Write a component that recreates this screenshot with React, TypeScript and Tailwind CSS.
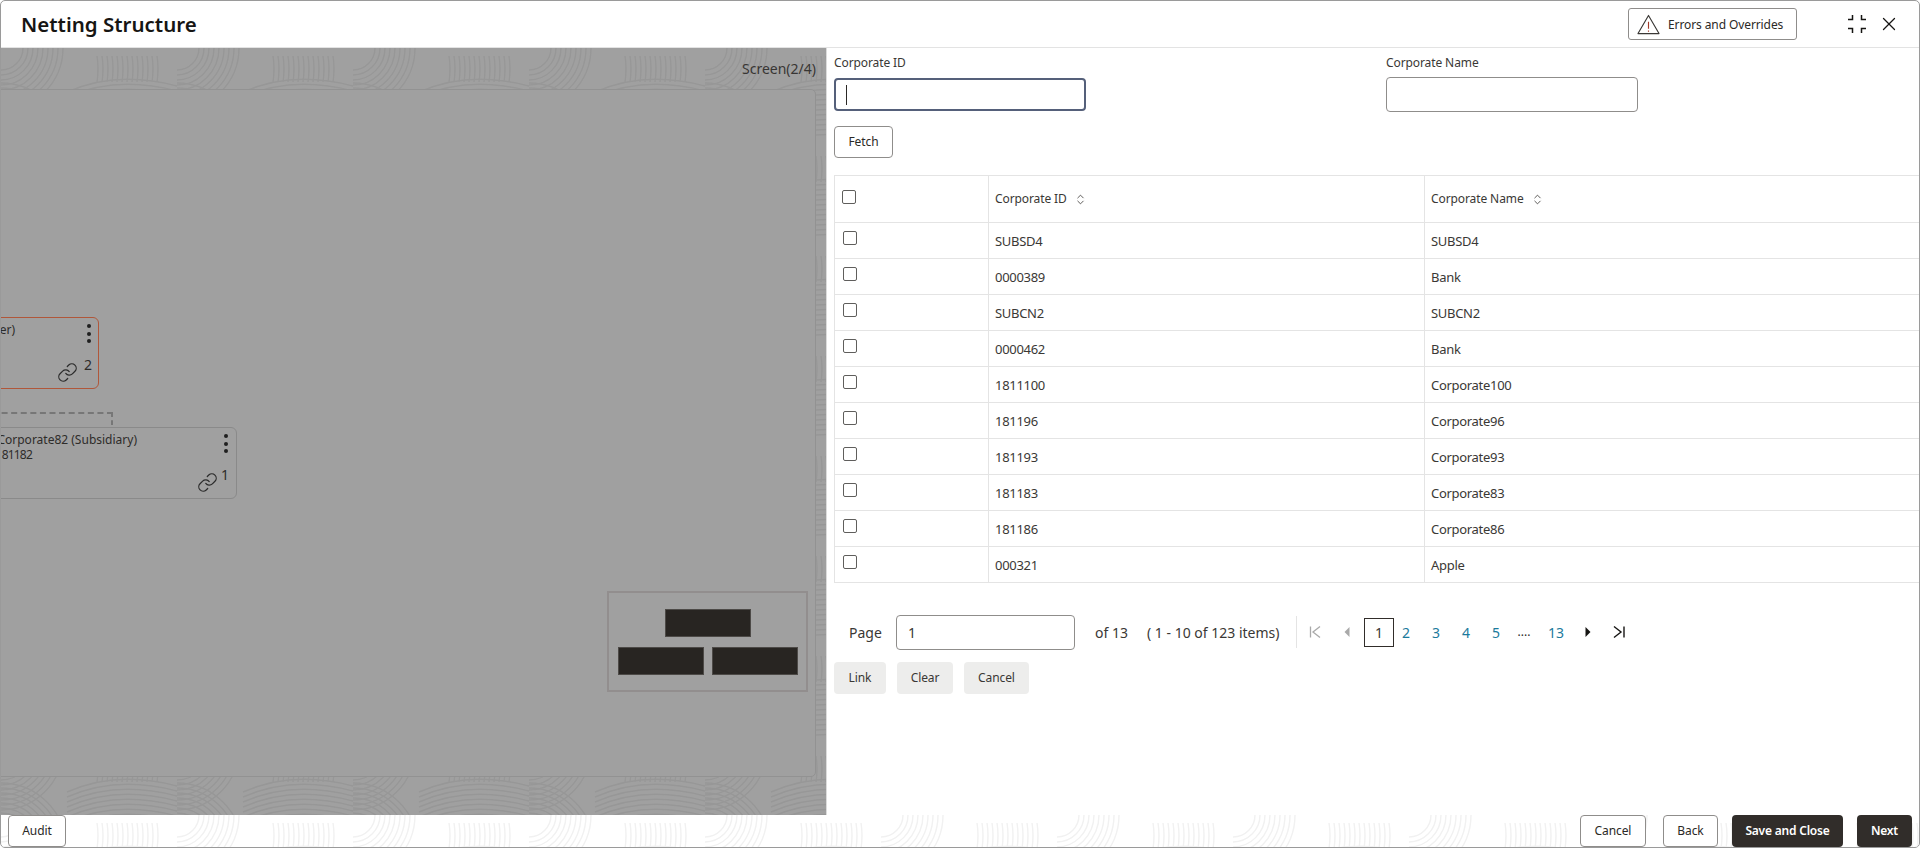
import React from "react";
import { X, ChevronsUpDown, Link as ChainIcon } from "lucide-react";

const rows = [
  ["SUBSD4", "SUBSD4"],
  ["0000389", "Bank"],
  ["SUBCN2", "SUBCN2"],
  ["0000462", "Bank"],
  ["1811100", "Corporate100"],
  ["181196", "Corporate96"],
  ["181193", "Corporate93"],
  ["181183", "Corporate83"],
  ["181186", "Corporate86"],
  ["000321", "Apple"],
];

function Pattern({ id, stroke }: { id: string; stroke: string }) {
  const arcs = (key: string, cx: number, cy: number, from: number, to: number) => {
    const out: React.ReactNode[] = [];
    for (let r = from; r <= to; r += 5) {
      out.push(<circle key={`${key}-${r}`} cx={cx} cy={cy} r={r} />);
    }
    return out;
  };
  const bars: React.ReactNode[] = [];
  for (let x = 96; x < 160; x += 5) {
    bars.push(<path key={x} d={`M${x} 8q2 12 0 26`} />);
  }
  const waves: React.ReactNode[] = [];
  for (let y = 44; y < 100; y += 5) {
    waves.push(<path key={y} d={`M66 ${y}q50 -22 110 -6`} />);
  }
  return (
    <svg className="absolute inset-0 h-full w-full" aria-hidden="true">
      <defs>
        <pattern id={id} width="176" height="100" patternUnits="userSpaceOnUse">
          <g fill="none" stroke={stroke} strokeWidth="1.4">
            {arcs("a", 0, 100, 20, 66)}
            {arcs("b", 0, 0, 22, 62)}
            {bars}
            {waves}
          </g>
        </pattern>
      </defs>
      <rect width="100%" height="100%" fill={`url(#${id})`} />
    </svg>
  );
}

function Dots({ className }: { className: string }) {
  return (
    <div className={`absolute flex flex-col gap-[3.5px] ${className}`}>
      <span className="h-[4px] w-[4px] rounded-full bg-[#1f1f1f]" />
      <span className="h-[4px] w-[4px] rounded-full bg-[#1f1f1f]" />
      <span className="h-[4px] w-[4px] rounded-full bg-[#1f1f1f]" />
    </div>
  );
}

function Check() {
  return <span className="block h-[14px] w-[14px] rounded-[2px] border border-[#5f5e5c] bg-white" />;
}

function Outline({ w, children }: { w: string; children: React.ReactNode }) {
  return (
    <button className={`relative h-[32px] ${w} rounded-[4px] border border-[#8f8d8b] bg-white text-[12px] tracking-[-0.1px] text-[#2b2926]`}>
      {children}
    </button>
  );
}

function Grey({ w, children }: { w: string; children: React.ReactNode }) {
  return <button className={`h-[32px] ${w} rounded-[4px] bg-[#ededec] text-[12px] tracking-[-0.1px] text-[#3a3835]`}>{children}</button>;
}

function Dark({ w, children }: { w: string; children: React.ReactNode }) {
  return <button className={`h-[32px] ${w} rounded-[4px] bg-[#312d2a] text-[12px] font-semibold tracking-[-0.2px] text-white`}>{children}</button>;
}

function PageNum({ children, w = "w-[30px]" }: { children: React.ReactNode; w?: string }) {
  return <span className={`${w} text-center text-[14px] text-[#1b7a9c]`}>{children}</span>;
}

export default function App() {
  return (
    <div className="relative flex h-[848px] w-[1920px] flex-col overflow-hidden rounded-[5px] border border-[#9a9a9a] bg-white font-['Noto_Sans','Open_Sans',sans-serif] text-[#2b2926]">
      <header className="flex h-[47px] shrink-0 items-center border-b border-[#e3e3e3] pl-[20px]">
        <h1 className="text-[20.5px] font-semibold text-[#161513]">Netting Structure</h1>
        <button className="ml-auto flex h-[32px] w-[169px] items-center rounded-[3px] border border-[#8f8d8b] pl-[8px] text-[12px] tracking-[-0.1px] text-[#2b2926]">
          <svg viewBox="0 0 24 22" className="h-[21px] w-[23px]" fill="none" strokeWidth="1.2">
            <path d="M12 1.5 23 20.5H1Z" stroke="#3a3835" strokeLinejoin="round" />
            <path d="M12 8v7.5M12 17.2v1.4" stroke="#a33b2a" />
          </svg>
          <span className="ml-[8px] pt-[1px]">Errors and Overrides</span>
        </button>
        <svg viewBox="0 0 20 20" className="ml-[50px] h-[20px] w-[20px]" fill="none" stroke="#161513" strokeWidth="1.5">
          <path d="M5.5 1v4.5H1M14.5 1v4.5H19M5.5 19v-4.5H1M14.5 19v-4.5H19" />
        </svg>
        <X className="ml-[11px] mr-[19px] h-[22px] w-[22px] text-[#161513]" strokeWidth={1.4} />
      </header>

      <main className="flex min-h-0 flex-1">
        <section className="relative w-[825px] shrink-0 overflow-hidden bg-[#a0a0a0]">
          <Pattern id="pd" stroke="#979797" />
          <div className="relative flex h-full flex-col pb-[38px] pr-[10px]">
            <div className="flex h-[41px] items-center justify-end text-[14px] text-[#383634]">Screen(2/4)</div>
            <div className="relative -ml-[10px] flex-1 overflow-hidden rounded-[5px] border border-[#929292] bg-[#a0a0a0]">
              <div className="absolute left-0 top-[227px] h-[72px] w-[107px] rounded-[6px] border border-[#b0573a]">
                <span className="absolute right-[83px] top-[3px] whitespace-nowrap text-[12px] text-[#2e2c2a]">er)</span>
                <Dots className="right-[7px] top-[6px]" />
                <ChainIcon className="absolute right-[20px] top-[44px] h-[21px] w-[21px] text-[#2b2b2b]" strokeWidth={1.4} />
                <span className="absolute right-[6px] top-[36px] text-[14px] text-[#2e2c2a]">2</span>
              </div>
              <div className="absolute left-0 top-[322px] h-[13px] w-[121px] border-r-2 border-t-2 border-dashed border-[#777777]" />
              <div className="absolute left-0 top-[337px] h-[72px] w-[245px] rounded-[6px] border border-[#8a8a8a]">
                <span className="absolute right-[99px] top-[3px] whitespace-nowrap text-[12px] text-[#2e2c2a]">Corporate82 (Subsidiary)</span>
                <span className="absolute right-[204px] top-[18px] whitespace-nowrap text-[12px] tracking-[-0.8px] text-[#2e2c2a]">181182</span>
                <Dots className="right-[8px] top-[6px]" />
                <ChainIcon className="absolute right-[18px] top-[44px] h-[21px] w-[21px] text-[#2b2b2b]" strokeWidth={1.4} />
                <span className="absolute right-[7px] top-[36px] text-[14px] text-[#2e2c2a]">1</span>
              </div>
              <div className="absolute left-[615px] top-[501px] flex h-[101px] w-[201px] flex-col items-center gap-[10px] border-2 border-[#928e8e] pt-[16px]">
                <div className="h-[28px] w-[86px] border border-[#4d4a47] bg-[#282522]" />
                <div className="flex gap-[8px]">
                  <div className="h-[28px] w-[86px] border border-[#4d4a47] bg-[#282522]" />
                  <div className="h-[28px] w-[86px] border border-[#4d4a47] bg-[#282522]" />
                </div>
              </div>
            </div>
          </div>
        </section>

        <section className="min-w-0 flex-1 border-l border-[#dcdcdc] pl-[7px]">
          <div className="flex pt-[6px]">
            <div className="w-[552px]">
              <label className="block text-[12px] leading-[18px] tracking-[-0.1px] text-[#3a3835]">Corporate ID</label>
              <div className="mt-[6px] flex h-[33px] w-[252px] items-center rounded-[4px] border-2 border-[#55607a] pl-[10px]">
                <span className="h-[20px] w-px bg-[#2b2926]" />
              </div>
            </div>
            <div>
              <label className="block text-[12px] leading-[18px] tracking-[-0.1px] text-[#3a3835]">Corporate Name</label>
              <div className="mt-[5px] h-[35px] w-[252px] rounded-[4px] border border-[#8f8d8b]" />
            </div>
          </div>
          <div className="mt-[14px] flex">
            <Outline w="w-[59px]">Fetch</Outline>
          </div>

          <table className="mt-[17px] w-[1086px] table-fixed border-collapse text-[13px] tracking-[-0.3px] text-[#3a3835]">
            <colgroup>
              <col className="w-[154px]" />
              <col className="w-[436px]" />
              <col />
            </colgroup>
            <thead>
              <tr className="h-[47px] border-y border-[#e4e4e4] text-[12px] tracking-[-0.1px]">
                <th className="border-l border-[#e4e4e4] pb-[4px] pl-[7px] text-left font-normal"><Check /></th>
                <th className="border-l border-[#e4e4e4] pl-[6px] text-left font-normal">
                  <span className="inline-flex items-center gap-[7px]">Corporate ID<ChevronsUpDown className="h-[13px] w-[13px]" strokeWidth={1.5} /></span>
                </th>
                <th className="border-l border-[#e4e4e4] pl-[6px] text-left font-normal">
                  <span className="inline-flex items-center gap-[7px]">Corporate Name<ChevronsUpDown className="h-[13px] w-[13px]" strokeWidth={1.5} /></span>
                </th>
              </tr>
            </thead>
            <tbody>
              {rows.map((r) => (
                <tr key={r[0]} className="h-[36px] border-b border-[#e4e4e4]">
                  <td className="border-l border-[#e4e4e4] pb-[6px] pl-[8px]"><Check /></td>
                  <td className="border-l border-[#e4e4e4] pl-[6px] pt-[3px]">{r[0]}</td>
                  <td className="border-l border-[#e4e4e4] pl-[6px] pt-[3px]">{r[1]}</td>
                </tr>
              ))}
            </tbody>
          </table>

          <div className="mt-[31px] flex h-[36px] items-center text-[14px] text-[#3a3835]">
            <span className="ml-[15px] w-[47px]">Page</span>
            <div className="flex h-[35px] w-[179px] items-center rounded-[4px] border border-[#8f8d8b] pl-[11px]">1</div>
            <span className="ml-[20px] w-[33px] whitespace-nowrap">of 13</span>
            <span className="ml-[19px] w-[133px] whitespace-nowrap">( 1 - 10 of 123 items)</span>
            <span className="ml-[16px] h-[32px] w-px bg-[#e4e4e4]" />
            <svg viewBox="0 0 14 14" className="ml-[11px] h-[14px] w-[14px]" fill="none" stroke="#a9a9a9" strokeWidth="1.3">
              <path d="M2.5 1.5v11M12 1.5 5 7l7 5.5" />
            </svg>
            <svg viewBox="0 0 10 14" className="ml-[20px] h-[14px] w-[10px]" fill="#a9a9a9"><path d="M7.5 2v10L2.5 7z" /></svg>
            <span className="ml-[12px] flex h-[29px] w-[30px] items-center justify-center border border-[#312d2a]">1</span>
            <span className="-ml-[3px] flex items-center">
              <PageNum>2</PageNum>
              <PageNum>3</PageNum>
              <PageNum>4</PageNum>
              <PageNum>5</PageNum>
              <span className="w-[26px] text-center text-[12px] text-[#2b2926]">....</span>
              <PageNum w="w-[38px]">13</PageNum>
            </span>
            <svg viewBox="0 0 10 14" className="ml-[8px] h-[14px] w-[10px]" fill="#161513"><path d="M2.5 2v10l5-5z" /></svg>
            <svg viewBox="0 0 14 14" className="ml-[19px] h-[14px] w-[14px]" fill="none" stroke="#161513" strokeWidth="1.4">
              <path d="M2 1.5 9 7l-7 5.5M12 1.5v11" />
            </svg>
          </div>

          <div className="mt-[12px] flex gap-[11px]">
            <Grey w="w-[52px]">Link</Grey>
            <Grey w="w-[56px]">Clear</Grey>
            <Grey w="w-[65px]">Cancel</Grey>
          </div>
        </section>
      </main>

      <footer className="relative flex h-[32px] shrink-0 items-center overflow-hidden px-[7px]">
        <Pattern id="pl" stroke="#f1f1f1" />
        <Outline w="w-[58px]">Audit</Outline>
        <div className="relative ml-auto flex items-center">
          <Outline w="w-[66px]">Cancel</Outline>
          <span className="ml-[17px] flex"><Outline w="w-[55px]">Back</Outline></span>
          <span className="ml-[14px] flex"><Dark w="w-[111px]">Save and Close</Dark></span>
          <span className="ml-[14px] flex"><Dark w="w-[55px]">Next</Dark></span>
        </div>
      </footer>
    </div>
  );
}
